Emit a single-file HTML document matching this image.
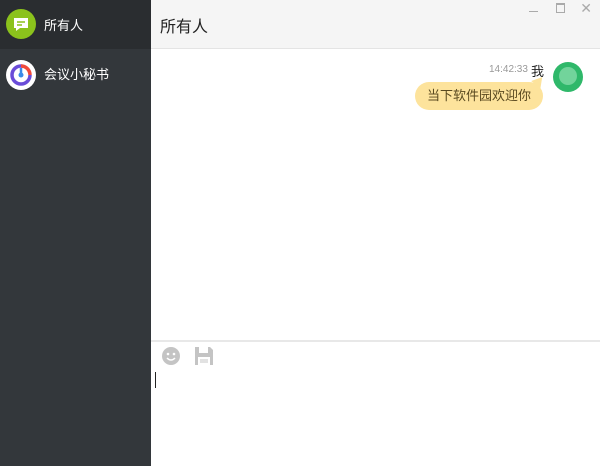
<!DOCTYPE html>
<html><head><meta charset="utf-8"><style>
body{margin:0;width:600px;height:466px;overflow:hidden;font-family:"Liberation Sans","Noto Sans CJK SC",sans-serif;position:relative;background:#fff}
.side{position:absolute;left:0;top:0;width:151px;height:466px;background:#33373b}
.it{position:absolute;left:0;width:151px;height:49px}
.it span{position:absolute;left:44px;top:15px;color:#fff;font-size:13px}
.hd{position:absolute;left:151px;top:0;right:0;height:48px;background:#f5f5f5;border-bottom:1px solid #e4e4e4}
.hd span{position:absolute;left:9px;top:13px;font-size:16px;color:#222}
</style></head><body>
<div class="side">
<div class="it" style="top:0;background:#2a2d30"><svg style="position:absolute;left:6px;top:9px" width="30" height="30"><circle cx="15" cy="15" r="15" fill="#8bc21c"/><path d="M8 9h14v10h-8l-4 3v-3h-2z" fill="#fff"/><path d="M11 13h8M11 16h5" stroke="#8bc21c" stroke-width="1.6"/></svg><span>所有人</span></div>
<div class="it" style="top:49px"><svg style="position:absolute;left:6px;top:11px" width="30" height="30"><circle cx="15" cy="15" r="15" fill="#fff"/><circle cx="15" cy="15" r="9" fill="none" stroke="#6a4cd8" stroke-width="3.5" stroke-dasharray="45 12"/><path d="M15 6a9 9 0 0 1 9 9" stroke="#f04a3a" stroke-width="3.5" fill="none"/><circle cx="15" cy="15" r="2.5" fill="#3a8be8"/><path d="M15 15V8" stroke="#3a8be8" stroke-width="2.5"/></svg><span>会议小秘书</span></div>
</div>
<div class="hd"><span>所有人</span>
<div style="position:absolute;right:62px;top:11px;width:9px;height:1px;background:#aaa"></div>
<div style="position:absolute;right:35px;top:3px;width:7px;height:7px;border:1px solid #aaa;border-top-width:2px"></div>
<div style="position:absolute;right:8px;top:0px;color:#aaa;font-size:14px">✕</div>
</div>
<div style="position:absolute;left:489px;top:64px;font-size:10px;color:#999">14:42:33</div>
<div style="position:absolute;left:531px;top:61px;font-size:13px;color:#222">我</div>
<svg style="position:absolute;left:553px;top:62px" width="30" height="30"><circle cx="15" cy="15" r="15" fill="#2fb86a"/><circle cx="15" cy="14" r="9" fill="#8fe0b0" opacity=".7"/></svg>
<div style="position:absolute;left:415px;top:82px;width:128px;height:28px;background:#fde39c;border-radius:14px;font-size:13px;color:#5a4a20;line-height:28px;text-align:center">当下软件园欢迎你</div>
<div style="position:absolute;left:533px;top:76px;width:0;height:0;border-left:6px solid transparent;border-right:6px solid transparent;border-bottom:10px solid #fde39c;transform:rotate(40deg)"></div>
<div style="position:absolute;left:151px;top:340px;right:0;height:2px;background:#e8e8e8"></div>
<svg style="position:absolute;left:161px;top:346px" width="20" height="20"><circle cx="10" cy="10" r="9" fill="#c4c4c4"/><circle cx="7" cy="8" r="1.3" fill="#fff"/><circle cx="13" cy="8" r="1.3" fill="#fff"/><path d="M6 12q4 4 8 0" stroke="#fff" stroke-width="1.5" fill="none"/></svg>
<svg style="position:absolute;left:194px;top:346px" width="20" height="20"><path d="M1 1h15l3 3v15H1z" fill="#c4c4c4"/><rect x="5" y="1" width="9" height="6" fill="#fff"/><rect x="4" y="11" width="12" height="8" fill="#fff"/><path d="M6 14h8M6 16h8" stroke="#c4c4c4"/></svg>
<div style="position:absolute;left:155px;top:372px;width:1px;height:16px;background:#222"></div>
</body></html>
